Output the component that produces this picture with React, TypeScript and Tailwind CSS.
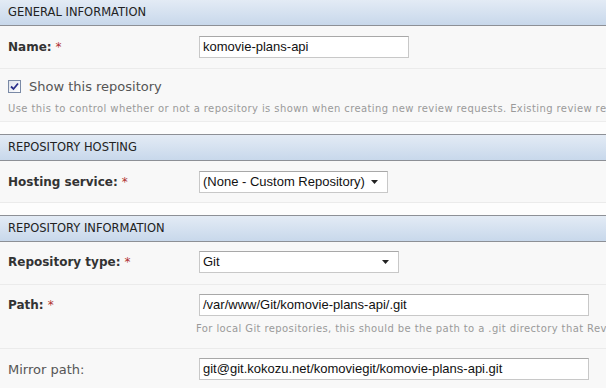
import React from 'react';

function SectionHeader({ title, first }: { title: string; first?: boolean }) {
  return (
    <div
      className={`${first ? 'h-[26px]' : 'border-t border-[#8d9096] h-[27px]'} border-b border-[#8d9096] bg-gradient-to-b from-[#e3ebf5] to-[#c8d8eb] px-2 flex items-center text-[11.5px] text-[#222]`}
    >
      {title}
    </div>
  );
}

function Req() {
  return <span className="text-[#b03030] font-normal ml-1">*</span>;
}

function Caret() {
  return (
    <svg width="7" height="4" viewBox="0 0 7 4" className="mr-[6px] shrink-0">
      <path d="M0 0 H7 L3.5 4 Z" fill="#222" />
    </svg>
  );
}

export default function App() {
  const inputCls =
    "h-[22px] shrink-0 border border-[#c8c8c8] border-t-[#a8a8a8] bg-white px-[3px] flex items-center text-[13px] text-[#111] font-['Liberation_Sans',sans-serif]";
  const labelCls = "w-[199px] shrink-0 pl-2 pt-[2px] text-[12px] font-bold text-[#333]";
  const helpCls = "text-[10px] text-[#9a9a9a] whitespace-nowrap tracking-[0.4px]";

  return (
    <div className="w-[606px] h-[388px] overflow-hidden bg-[#fdfdfd] font-['DejaVu_Sans',sans-serif]">
      <SectionHeader title="GENERAL INFORMATION" first />

      {/* Name */}
      <div className="h-[43px] bg-[#f8f8f8] border-b border-[#ebebeb] flex pt-[10px]">
        <div className={labelCls}>
          Name:<Req />
        </div>
        <div className={`${inputCls} w-[210px]`}>komovie-plans-api</div>
      </div>

      {/* Show this repository */}
      <div className="h-[53px] bg-[#f8f8f8] border-b border-[#ededed] pl-2 pt-[8px] overflow-hidden">
        <div className="flex items-center gap-[8px]">
          <div className="w-[13px] h-[13px] border border-[#7a8aa6] bg-gradient-to-br from-[#dfe3ec] to-[#ffffff] flex items-center justify-center">
            <svg width="9" height="9" viewBox="0 0 9 9">
              <path d="M1 4.5 L3.5 7 L8 1.5" stroke="#2a2f8a" strokeWidth="1.8" fill="none" />
            </svg>
          </div>
          <span className="text-[13px] text-[#555]">Show this repository</span>
        </div>
        <div className={`mt-[4px] ${helpCls}`}>
          Use this to control whether or not a repository is shown when creating new review requests. Existing review requests
        </div>
      </div>

      <div className="h-[12px]" />
      <SectionHeader title="REPOSITORY HOSTING" />

      {/* Hosting service */}
      <div className="h-[42px] bg-[#f8f8f8] border-b border-[#ebebeb] flex pt-[10px]">
        <div className={labelCls}>
          Hosting service:<Req />
        </div>
        <div className={`${inputCls} w-[189px] justify-between`}>
          <span>(None - Custom Repository)</span>
          <Caret />
        </div>
      </div>

      <div className="h-[12px]" />
      <SectionHeader title="REPOSITORY INFORMATION" />

      {/* Repository type */}
      <div className="h-[43px] bg-[#f8f8f8] border-b border-[#ebebeb] flex pt-[9px]">
        <div className={labelCls}>
          Repository type:<Req />
        </div>
        <div className={`${inputCls} w-[200px] justify-between`}>
          <span>Git</span>
          <Caret />
        </div>
      </div>

      {/* Path */}
      <div className="h-[64px] bg-[#f8f8f8] border-b border-[#ebebeb] flex pt-[9px] overflow-hidden">
        <div className={labelCls}>
          Path:<Req />
        </div>
        <div className="shrink-0">
          <div className={`${inputCls} w-[390px]`}>/var/www/Git/komovie-plans-api/.git</div>
          <div className={`mt-[5px] -ml-[3px] ${helpCls}`}>
            For local Git repositories, this should be the path to a .git directory that Review Board can read from
          </div>
        </div>
      </div>

      {/* Mirror path */}
      <div className="h-[60px] bg-[#f8f8f8] flex pt-[9px]">
        <div className="w-[199px] shrink-0 pl-2 pt-[2px] text-[13px] text-[#555]">Mirror path:</div>
        <div className={`${inputCls} w-[390px]`}>git@git.kokozu.net/komoviegit/komovie-plans-api.git</div>
      </div>
    </div>
  );
}
